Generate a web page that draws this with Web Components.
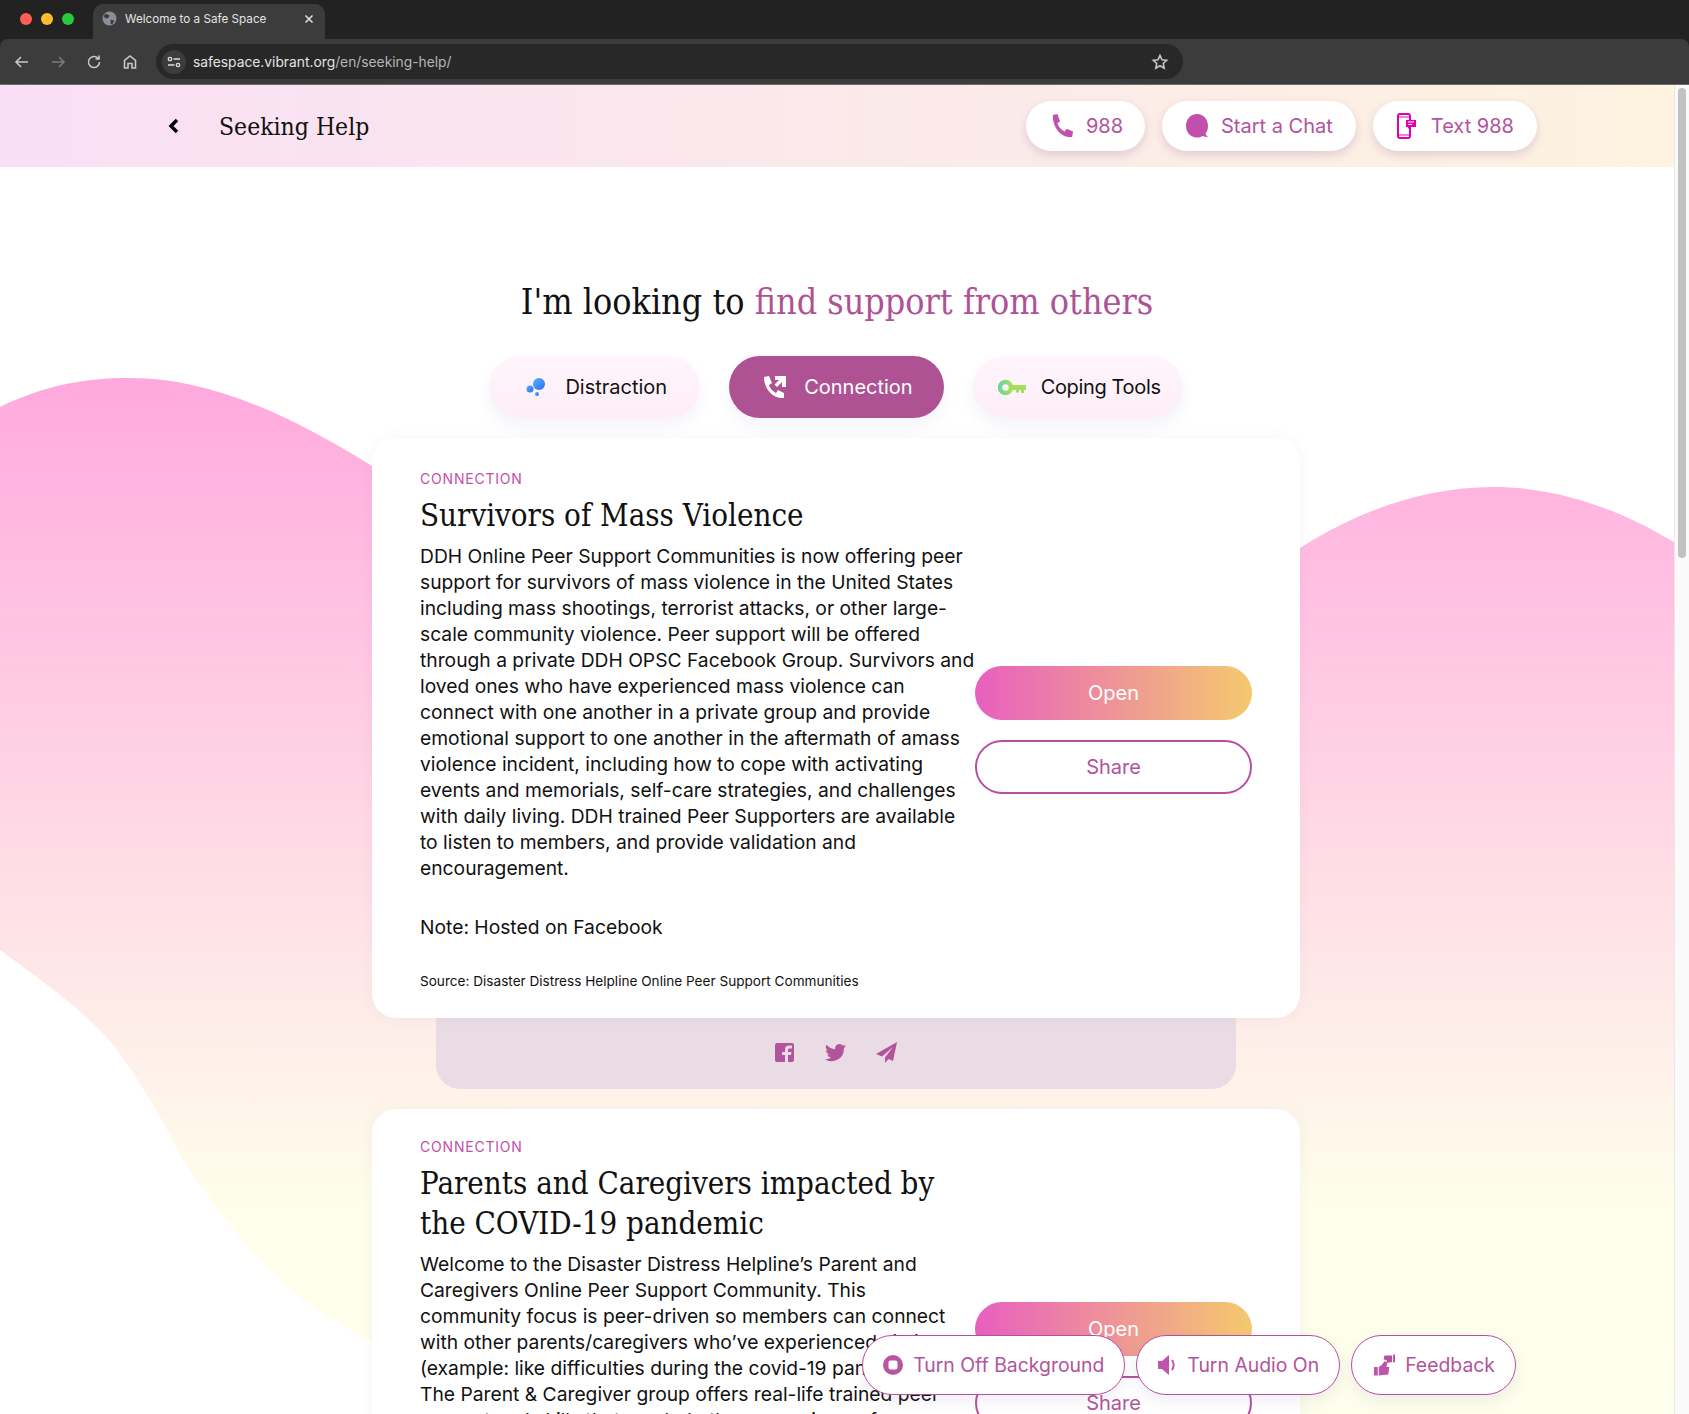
<!DOCTYPE html>
<html><head><meta charset="utf-8"><style>
html,body{margin:0;padding:0;height:100%;overflow:hidden;background:#fff}
body{font-family:"Inter","Liberation Sans",sans-serif;display:flex;flex-direction:column;height:1414px;position:relative}
</style></head><body>
<template id="t-chrome"><style>
:host{display:block;background:#222;height:85px;font-family:Inter,"Liberation Sans",sans-serif;flex:none}
.strip{height:39px;display:flex;align-items:flex-end;padding-left:20px}
.dots{display:flex;gap:9px;align-self:center;margin-top:-2px;margin-right:19px}
.dots i{width:12px;height:12px;border-radius:50%}
.tab{width:232px;height:35px;background:#3c3c3c;border-radius:10px 10px 0 0;display:flex;align-items:center;box-sizing:border-box;padding:0 11px 6px 9px;color:#e3e3e3;font-size:11.700px}
.tab span{flex:1;margin-left:8px}
.bar{height:46px;background:#3c3c3c;border-radius:8px 8px 0 0;display:flex;align-items:center;padding-left:13px;box-sizing:border-box;border-bottom:1px solid #6b6b6b}
.nav{display:flex;gap:18px;margin-right:17px}
.url{width:1027px;height:35px;border-radius:18px;background:#282828;display:flex;align-items:center;color:#e3e3e3;font-size:13.800px;box-sizing:border-box;padding:0 14px 0 6px}
.tune{width:24px;height:24px;border-radius:50%;background:#3c3c3c;display:flex;align-items:center;justify-content:center;margin-right:7px}
.url span{flex:1}.url em{font-style:normal;color:#b6b6b6}
svg{display:block}
</style>
<div class="strip"><div class="dots"><i style="background:#ff5f57"></i><i style="background:#febc2e"></i><i style="background:#28c840"></i></div>
<div class="tab"><svg width="15" height="15" viewBox="0 0 14 14"><circle cx="7" cy="7" r="6.500" fill="#8a9097"/><path d="M3 2.500 7 4 6 6.500 3.500 7 1.500 5ZM8 8l3.500 1-2 3.500L8 12Z" fill="#3c3c3c"/></svg><span>Welcome to a Safe Space</span><svg width="10" height="10" viewBox="0 0 10 10"><path d="M1.500 1.500l7 7M8.500 1.500l-7 7" stroke="#e3e3e3" stroke-width="1.500"/></svg></div></div>
<div class="bar"><div class="nav">
<svg width="18" height="18" viewBox="0 0 18 18" fill="none" stroke="#c7c7c7" stroke-width="1.600"><path d="M15 9H3M8 4 3 9l5 5"/></svg>
<svg width="18" height="18" viewBox="0 0 18 18" fill="none" stroke="#7a7a7a" stroke-width="1.600"><path d="M3 9h12M10 4l5 5-5 5"/></svg>
<svg width="18" height="18" viewBox="0 0 18 18" fill="none" stroke="#c7c7c7" stroke-width="1.600"><path d="M14.500 9A5.500 5.500 0 1 1 13 5.200M14 2.500v3.500h-3.500"/></svg>
<svg width="18" height="18" viewBox="0 0 18 18" fill="none" stroke="#c7c7c7" stroke-width="1.600"><path d="M3.500 15V7.500L9 3l5.500 4.500V15h-3.500v-4.500H7V15Z"/></svg>
</div><div class="url"><div class="tune"><svg width="14" height="12" viewBox="0 0 14 12" fill="none" stroke="#dcdcdc" stroke-width="1.300"><circle cx="3" cy="3" r="1.700"/><path d="M6.500 3H13M1 9h6.500"/><circle cx="11" cy="9" r="1.700"/></svg></div><span>safespace.vibrant.org<em>/en/seeking-help/</em></span><svg width="18" height="18" viewBox="0 0 18 18" fill="none" stroke="#c7c7c7" stroke-width="1.600"><path d="M9 2.500l2 4.300 4.700.5-3.500 3.200 1 4.600L9 12.700l-4.200 2.400 1-4.600-3.500-3.200 4.700-.5Z"/></svg></div></div>
</template>

<template id="t-pill"><style>
:host{display:inline-flex;align-items:center;height:50px;border-radius:25px;background:#fff;color:#b2549b;font-size:20px;box-shadow:0 4px 10px rgba(120,70,140,.2);padding:0 24px;gap:12px;box-sizing:border-box;white-space:nowrap}
</style><slot name="icon"></slot><slot></slot></template>

<template id="t-tab"><style>
:host{display:inline-flex;align-items:center;height:62px;border-radius:31px;background:linear-gradient(#fff5fb,#fdeef8);color:#111;font-size:20px;box-shadow:0 8px 14px rgba(120,120,200,.08);box-sizing:border-box;white-space:nowrap}
:host([active]){background:#af5294;color:#fff}
</style><slot name="icon"></slot><slot></slot></template>

<template id="t-header"><style>
:host{display:flex;flex:none;align-items:center;width:1674px;height:82px;background:linear-gradient(90deg,#f9dff5,#fdf3e0);padding:0 137px 0 168px;box-sizing:border-box;position:relative;z-index:2}
h1{font:400 24.500px "DejaVu Serif Condensed","DejaVu Serif",serif;color:#111;margin:0 0 0 39px;flex:1}
.p{display:flex;gap:17px}
svg{display:block}
</style><svg width="12" height="16" viewBox="0 0 12 16" fill="none" stroke="#000" stroke-width="3.400"><path d="M9 2 3 8l6 6"/></svg><h1>Seeking Help</h1><div class="p"><slot></slot></div></template>

<template id="t-card"><style>
:host{display:block;background:#fff;border-radius:24px;box-shadow:0 0 14px rgba(100,100,160,.06);width:928px;box-sizing:border-box;padding:28px 48px;display:grid;grid-template-columns:555px 277px;position:relative;z-index:1}
.k{font-size:14px;letter-spacing:.8px;color:#c44fa8;line-height:18px}
h2{font:400 31px/40px "DejaVu Serif Condensed","DejaVu Serif",serif;color:#111;margin:7px 0 8px}
.body{font-size:19.250px;line-height:26px;color:#111}
.note{margin-top:33px;font-size:19.250px;line-height:26px;color:#111}
.src{margin-top:32px;font-size:13.600px;line-height:18px;color:#111}
.a{display:flex;flex-direction:column;gap:20px;justify-content:center}
button{height:54px;border-radius:27px;font:inherit;font-size:20px;border:0;cursor:pointer;width:277px;box-sizing:border-box}
.o{background:linear-gradient(90deg,#e85fc0,#f4c96e);color:#fff}
.s{background:#fff;border:2px solid #b74fa0;color:#b2549b}
</style><div><div class="k">CONNECTION</div><h2><slot name="title"></slot></h2><div class="body"><slot></slot></div><div class="note"><slot name="note"></slot></div><div class="src"><slot name="source"></slot></div></div>
<div class="a"><button class="o">Open</button><button class="s">Share</button></div></template>

<template id="t-tray"><style>
:host{display:flex;width:800px;height:71px;margin:0 auto;background:#e9dce4;border-radius:0 0 24px 24px;align-items:center;justify-content:center;gap:26px;box-sizing:border-box;padding:0 2px 3px 0}
svg{display:block}
</style><svg width="25" height="25" viewBox="0 0 25 25"><path fill="#b2549b" d="M5 3h15a2 2 0 0 1 2 2v15a2 2 0 0 1-2 2h-4v-7h3l.5-3H16v-2c0-1 .5-1.500 1.500-1.500H20V5.500h-3c-2.500 0-4 1.500-4 4V12h-3v3h3v7H5a2 2 0 0 1-2-2V5a2 2 0 0 1 2-2Z"/></svg>
<svg width="25" height="25" viewBox="0 0 24 24"><path fill="#b2549b" d="M22 5.800a8 8 0 0 1-2.400.7 4.100 4.100 0 0 0 1.800-2.300 8 8 0 0 1-2.600 1 4.100 4.100 0 0 0-7 3.700A11.600 11.600 0 0 1 3.400 4.600a4.100 4.100 0 0 0 1.300 5.500 4 4 0 0 1-1.900-.5c0 2 1.400 3.700 3.300 4.100a4 4 0 0 1-1.900.1 4.100 4.100 0 0 0 3.800 2.900A8.200 8.200 0 0 1 2 18.400 11.600 11.600 0 0 0 20 8.100a8 8 0 0 0 2-2.300Z"/></svg>
<svg width="25" height="25" viewBox="0 0 25 25"><path fill="#b2549b" d="M23 2 2 14l6 2.500L19 7l-8 10.500V23l3.500-4 4.500 2Z"/></svg></template>

<template id="t-floatbar"><style>
:host{position:absolute;right:173px;bottom:19px;display:flex;gap:11px;z-index:5}
</style><slot></slot></template>

<template id="t-floatbtn"><style>
:host{display:inline-flex;align-items:center;height:60px;border-radius:30px;background:#fff;border:1px solid #b74fa0;color:#b2549b;font-size:19.400px;padding:0 20px;gap:10px;box-sizing:border-box;white-space:nowrap;box-shadow:0 6px 14px rgba(120,120,180,.12)}
</style><slot name="icon"></slot><slot></slot></template>

<template id="t-scrollbar"><style>
:host{position:absolute;right:0;top:85px;bottom:0;width:15px;background:#fafafa;border-left:1px solid #e8e8e8;box-sizing:border-box;z-index:6}
i{display:block;margin:3px 3px 0 3px;height:470px;width:8px;background:#c1c1c1;border-radius:4px}
</style><i></i></template>

<template id="t-page"><style>
:host{display:block;flex:1;position:relative;overflow:hidden;background:#fff}
.bg{position:absolute;left:0;top:-82px;width:1674px;height:1329px;display:block}
.scroll{position:relative;width:1674px;height:1247px;overflow:hidden}
main{position:relative;display:flex;flex-direction:column;align-items:center;padding-top:109px}
h2.q{font:400 35.600px/52px "DejaVu Serif Condensed","DejaVu Serif",serif;color:#111;margin:0;text-align:center}
h2.q span{color:#af5294}
.tabs{display:flex;gap:29px;margin:28px 2px 20px 0}
.list{display:flex;flex-direction:column;gap:20px;margin-right:2px}
</style>
<div class="scroll">
<svg class="bg" viewBox="0 0 1674 1329"><defs><linearGradient id="g" gradientUnits="userSpaceOnUse" x1="0" y1="293" x2="0" y2="1329"><stop offset="0" stop-color="#ffa8dd"/><stop offset=".195" stop-color="#ffbfe1"/><stop offset=".504" stop-color="#ffe0e6"/><stop offset=".687" stop-color="#fef3ea"/><stop offset=".803" stop-color="#fefeea"/><stop offset="1" stop-color="#fefeec"/></linearGradient></defs>
<path fill="url(#g)" d="M0 322C45 300 85 293 130 293 210 293 290 330 372 381L1300 463C1360 425 1425 402 1493 402 1560 402 1620 425 1674 457V1329H500L372 1257C340 1240 300 1217 270 1185 240 1155 210 1115 183 1075 165 1040 145 1003 117 965 95 935 55 905 0 865Z"/></svg>
<main><h2 class="q">I'm looking to <span>find support from others</span></h2>
<div class="tabs"><slot name="tabs"></slot></div>
<div class="list"><slot></slot></div></main></div>
<slot name="overlay"></slot>
</template>

<browser-chrome></browser-chrome>
<page-scrollbar></page-scrollbar>
<app-header>
  <contact-pill style="padding:0 22px 0 24px"><svg slot="icon" width="24" height="26" viewBox="0 0 26 28"><path fill="#c054ac" d="M3 2l5-1 3 8-3 2c1 4 4 7 8 9l2-3 7 3-1 6c-12 1-21-10-21-24Z"/></svg>988</contact-pill>
  <contact-pill style="padding:0 23px"><svg slot="icon" width="24" height="26" viewBox="0 0 24 26"><path fill="#c24fac" d="M12 1c6.500 0 11 5 11 12 0 3-1 6-2.500 8l2.500 3.500-5.500-1.500c-1.500 1-3.500 1.500-5.500 1.500C5.500 24.500 1 19.500 1 13S5.500 1 12 1Z"/></svg>Start a Chat</contact-pill>
  <contact-pill style="gap:14px;padding:0 23px 0 24px"><svg slot="icon" width="20" height="26" viewBox="0 0 20 26" fill="none"><rect x="1" y="1" width="12" height="24" rx="2" stroke="#e000b0" stroke-width="2"/><path stroke="#e000b0" d="M1 4h12M1 22h12"/><path fill="#e000b0" d="M9 7h10v7h-6l-2 2v-2H9Z"/><path stroke="#fff" d="M11 9h6M11 11.500h4"/></svg>Text 988</contact-pill>
</app-header>
<safe-page>
  <cat-tab slot="tabs" style="padding:0 33px 0 36px;gap:18px"><svg slot="icon" width="22" height="22" viewBox="0 0 22 22"><defs><linearGradient id="b1" x1="0" y1="0" x2="1" y2="1"><stop offset="0" stop-color="#53b6ff"/><stop offset="1" stop-color="#2d6cf0"/></linearGradient></defs><circle cx="14" cy="8" r="6" fill="url(#b1)"/><circle cx="5" cy="13" r="3.500" fill="url(#b1)"/><circle cx="12" cy="18" r="2" fill="url(#b1)"/></svg>Distraction</cat-tab>
  <cat-tab slot="tabs" active style="padding:0 31px 0 34px;gap:17px"><svg slot="icon" width="24" height="24" viewBox="0 0 24 24"><path fill="#fff" d="M1 2l5-1 3 7-3 2c1 3 3 6 7 8l2-3 6 3v5c-11 1-20-9-20-21Z"/><path fill="#fff" d="M12 1h11v11h-4V7l-5 5-2.500-2.500 4.500-4.500h-4Z"/></svg>Connection</cat-tab>
  <cat-tab slot="tabs" style="padding:0 22px 0 25px;gap:15px;letter-spacing:-.35px"><svg slot="icon" width="28" height="17" viewBox="0 0 28 16" fill="none"><defs><linearGradient id="k1" x1="0" y1="0" x2="1" y2="0"><stop offset="0" stop-color="#6ed7a0"/><stop offset="1" stop-color="#a8df55"/></linearGradient></defs><circle cx="7.500" cy="8" r="5.500" stroke="url(#k1)" stroke-width="4.500"/><path fill="#a4de5a" d="M13 5.500h15v5h-2v3h-3v-3h-2v2.500h-3v-2.500h-5Z"/></svg>Coping Tools</cat-tab>
  <resource-card style="padding-top:32px"><span slot="title">Survivors of Mass Violence</span>DDH Online Peer Support Communities is now offering peer support for survivors of mass violence in the United States including mass shootings, terrorist attacks, or other large-scale community violence. Peer support will be offered through a private DDH OPSC Facebook Group. Survivors and loved ones who have experienced mass violence can connect with one another in a private group and provide emotional support to one another in the aftermath of amass violence incident, including how to cope with activating events and memorials, self-care strategies, and challenges with daily living. DDH trained Peer Supporters are available to listen to members, and provide validation and encouragement.<span slot="note">Note: Hosted on Facebook</span><span slot="source">Source: Disaster Distress Helpline Online Peer Support Communities</span></resource-card>
  <share-tray style="margin-top:-20px"></share-tray>
  <resource-card style="min-height:513px;padding-top:29px"><span slot="title">Parents and Caregivers impacted by the COVID-19 pandemic</span>Welcome to the Disaster Distress Helpline’s Parent and Caregivers Online Peer Support Community. This<br>community focus is peer-driven so members can connect with other parents/caregivers who’ve experienced similar<br>(example: like difficulties during the covid-19 pandemic).<br>The Parent &amp; Caregiver group offers real-life trained peer<br>support and skills that can help them cope in a safe</resource-card>
  <float-bar slot="overlay">
    <float-btn><svg slot="icon" width="20" height="20" viewBox="0 0 20 20"><circle cx="10" cy="10" r="10" fill="#b9549f"/><rect x="5.500" y="5.500" width="9" height="9" rx="2" fill="#fff"/></svg>Turn Off Background</float-btn>
    <float-btn><svg slot="icon" width="20" height="22" viewBox="0 0 20 22"><path fill="#c054ac" d="M1 7h4l7-6v20l-7-6H1Z"/><path stroke="#c054ac" stroke-width="2" fill="none" d="M15 6c2 3 2 7 0 10"/></svg>Turn Audio On</float-btn>
    <float-btn style="padding:0 20px 0 21px;gap:9px"><svg slot="icon" width="23" height="24" viewBox="0 0 24 24"><path fill="#c054ac" d="M1 14h4v9H1ZM6 14l3-2 3-4 3 1-1 5h3l-1 8-10 1Z"/><path fill="#b2549b" d="M12 2h8v7h-2l-3 1-1-3-3-1ZM21 1h2v8h-2Z"/></svg>Feedback</float-btn>
  </float-bar>
</safe-page>
<script>
function tpl(name, id) {
  customElements.define(name, class extends HTMLElement {
    constructor() {
      super();
      this.attachShadow({mode: 'open'}).appendChild(document.getElementById(id).content.cloneNode(true));
    }
  });
}
tpl('browser-chrome', 't-chrome');
tpl('page-scrollbar', 't-scrollbar');
tpl('app-header', 't-header');
tpl('contact-pill', 't-pill');
tpl('cat-tab', 't-tab');
tpl('resource-card', 't-card');
tpl('share-tray', 't-tray');
tpl('float-bar', 't-floatbar');
tpl('float-btn', 't-floatbtn');
tpl('safe-page', 't-page');
</script>
</body></html>
